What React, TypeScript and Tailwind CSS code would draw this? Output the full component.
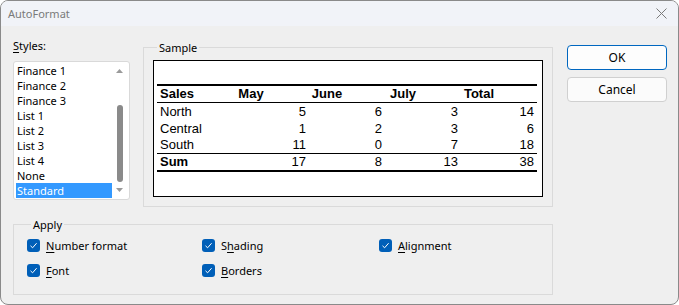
import React from 'react';

const styleItems = ['Finance 1', 'Finance 2', 'Finance 3', 'List 1', 'List 2', 'List 3', 'List 4', 'None', 'Standard'];

const rows: [string, number, number, number, number][] = [
  ['North', 5, 6, 3, 14],
  ['Central', 1, 2, 3, 6],
  ['South', 11, 0, 7, 18],
];

function Check({ children }: { children: React.ReactNode }) {
  return (
    <div className="flex items-center h-[15px]">
      <div className="w-[13px] h-[13px] rounded-[3px] bg-[#005fb8] flex items-center justify-center">
        <svg width="9" height="9" viewBox="0 0 9 9">
          <path d="M1.5 4.8 L3.6 6.8 L7.6 2.2" fill="none" stroke="white" strokeWidth="1" />
        </svg>
      </div>
      <span className="ml-[6px]">{children}</span>
    </div>
  );
}

function Key({ children }: { children: React.ReactNode }) {
  return <span className="underline underline-offset-[2px]">{children}</span>;
}

export default function App() {
  return (
    <div className="w-[679px] h-[305px] bg-[#efefef] border border-[#8a8a8a] rounded-[8px] overflow-hidden font-['Noto_Sans','Liberation_Sans',sans-serif] text-[11px] leading-[15px] text-black">
      {/* Title bar */}
      <div className="h-[25px] bg-[#f1f3f8] flex items-center justify-between pl-[7px] pr-[11px]">
        <span className="text-[#7a7a7a]">AutoFormat</span>
        <svg width="11" height="11" viewBox="0 0 11 11">
          <path d="M0.5 0.5 L10.5 10.5 M10.5 0.5 L0.5 10.5" stroke="#7a7a7a" strokeWidth="1" />
        </svg>
      </div>

      {/* Body */}
      <div className="pt-[12px] pl-[12px] pr-[11px]">
        <div className="flex items-start">
          {/* Styles */}
          <div className="w-[117px]">
            <div><Key>S</Key>tyles:</div>
            <div className="mt-[8px] h-[139px] bg-white border border-[#d9d9d9] rounded-[3px] flex">
              <div className="ml-[2px] w-[96px] pt-[1px]">
                {styleItems.map((s) => (
                  <div
                    key={s}
                    className={
                      s === 'Standard'
                        ? 'h-[15px] pl-[1px] bg-[#3399ff] text-white'
                        : 'h-[15px] pl-[1px]'
                    }
                  >
                    {s}
                  </div>
                ))}
              </div>
              <div className="w-[15px] flex flex-col items-center">
                <svg className="mt-[7px]" width="7" height="4" viewBox="0 0 7 4">
                  <path d="M3.5 0 L7 4 L0 4 Z" fill="#9a9a9a" />
                </svg>
                <div className="mt-[32px] w-[6px] h-[77px] rounded-full bg-[#8a8a8a]" />
                <svg className="mt-[6px]" width="7" height="4" viewBox="0 0 7 4">
                  <path d="M0 0 L7 0 L3.5 4 Z" fill="#9a9a9a" />
                </svg>
              </div>
            </div>
          </div>

          {/* Sample */}
          <fieldset className="ml-[13px] mt-[2px] w-[410px] border border-[#dadada] px-[9px] pt-[5px] pb-[9px]">
            <legend className="ml-[4px] px-[2px] leading-[15px]">Sample</legend>
            <div className="h-[137px] bg-white border border-black pt-[23px] pl-[3px] pr-[5px] font-['Liberation_Sans',Arial,sans-serif] text-[13px] leading-[16px]">
              <div className="border-t-2 border-black">
                <div className="h-[17px] border-b border-black grid grid-cols-[73px_76px_76px_76px_79px] font-bold items-center">
                  <span className="pl-[3px]">Sales</span>
                  <span className="text-center pr-[34px]">May</span>
                  <span className="text-center pr-[34px]">June</span>
                  <span className="text-center pr-[34px]">July</span>
                  <span className="text-center pr-[37px]">Total</span>
                </div>
                {rows.map((r, i) => (
                  <div
                    key={r[0]}
                    className={
                      i === 2
                        ? 'h-[17px] border-b border-black grid grid-cols-[73px_76px_76px_76px_79px] items-center'
                        : 'h-[17px] grid grid-cols-[73px_76px_76px_76px_79px] items-center'
                    }
                  >
                    <span className="pl-[3px]">{r[0]}</span>
                    <span className="text-right">{r[1]}</span>
                    <span className="text-right">{r[2]}</span>
                    <span className="text-right">{r[3]}</span>
                    <span className="text-right pr-[3px]">{r[4]}</span>
                  </div>
                ))}
                <div className="h-[18px] border-b-2 border-black grid grid-cols-[73px_76px_76px_76px_79px] items-center">
                  <span className="pl-[3px] font-bold">Sum</span>
                  <span className="text-right">17</span>
                  <span className="text-right">8</span>
                  <span className="text-right">13</span>
                  <span className="text-right pr-[3px]">38</span>
                </div>
              </div>
            </div>
          </fieldset>

          {/* Buttons */}
          <div className="ml-[14px] mt-[7px] w-[100px] flex flex-col gap-[7px]">
            <button className="h-[25px] rounded-[4px] bg-[#fdfdfd] border border-[#0067c0] text-[12px]">OK</button>
            <button className="h-[25px] rounded-[4px] bg-[#fbfbfb] border border-[#d0d0d0] text-[12px]">Cancel</button>
          </div>
        </div>

        {/* Apply */}
        <fieldset className="mt-[10px] w-[540px] border border-[#dadada] pl-[13px] pt-[6px] pb-[16px]">
          <legend className="ml-[4px] px-[2px] leading-[15px]">Apply</legend>
          <div className="grid grid-cols-[175px_177px_1fr] gap-y-[10px]">
            <Check><Key>N</Key>umber format</Check>
            <Check>S<Key>h</Key>ading</Check>
            <Check><Key>A</Key>lignment</Check>
            <Check><Key>F</Key>ont</Check>
            <Check><Key>B</Key>orders</Check>
          </div>
        </fieldset>
      </div>
    </div>
  );
}
